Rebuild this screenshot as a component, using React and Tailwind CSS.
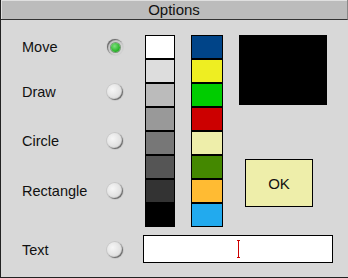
import React from 'react';

const grays = ['#ffffff', '#dddddd', '#bbbbbb', '#999999', '#777777', '#555555', '#333333', '#000000'];
const colours = ['#004488', '#eeee22', '#00cc00', '#cc0000', '#eeeeaa', '#448800', '#ffbb33', '#22aaee'];

const tools = [
  { label: 'Move', mt: 'mt-[17px]', on: true },
  { label: 'Draw', mt: 'mt-[25px]' },
  { label: 'Circle', mt: 'mt-[29px]' },
  { label: 'Rectangle', mt: 'mt-[30px]' },
];

function Radio({ on }) {
  if (on) {
    return (
      <div className="w-4 h-4 rounded-full bg-[radial-gradient(circle_at_60%_60%,#e8e8e8,#c4c4c4_70%,#8a8a8a)] shadow-[inset_1px_1px_1px_#666,0_0_0_1px_#d0d0d0] flex items-center justify-center">
        <div className="w-[9px] h-[9px] rounded-full bg-[radial-gradient(circle_at_40%_35%,#7fe07f,#22b022_70%,#127a12)] shadow-[0_0_0_1px_#7a9a7a]" />
      </div>
    );
  }
  return (
    <div className="w-4 h-4 rounded-full bg-[radial-gradient(circle_at_35%_35%,#f6f6f6,#e0e0e0_60%,#b0b0b0)] shadow-[inset_-1px_-1px_1px_#666,0_0_0_1px_#c8c8c8]" />
  );
}

function Row({ label, on, className }) {
  return (
    <div className={`flex items-center h-5 ${className || ''}`}>
      <span className="w-[84px] pl-[21px] box-content text-[14.5px] leading-none text-[#111]">{label}</span>
      <div className="ml-[1px]">
        <Radio on={on} />
      </div>
    </div>
  );
}

function Column({ list, width }) {
  return (
    <div className={`flex flex-col ${width}`}>
      {list.map((c) => (
        <div key={c} className="h-6 border border-black" style={{ background: c }} />
      ))}
    </div>
  );
}

export default function App() {
  return (
    <div className="w-[348px] h-[278px] bg-[#d8d8d8] border-l border-b border-[#222] flex flex-col overflow-hidden" style={{ fontFamily: '"Liberation Sans", Arial, sans-serif' }}>
      <div className="h-5 shrink-0 bg-[#bcbcbc] border-b border-[#333] border-r border-r-[#888] shadow-[inset_1px_1px_0_#e0e0e0] flex items-center justify-center text-[15px] leading-none text-[#111]">
        Options
      </div>

      <div className="flex h-[207px]">
        <div className="flex flex-col w-[144px]">
          {tools.map((t) => (
            <Row key={t.label} label={t.label} on={t.on} className={t.mt} />
          ))}
        </div>
        <div className="pt-[15px] flex gap-4">
          <Column list={grays} width="w-[30px]" />
          <Column list={colours} width="w-8" />
        </div>
        <div className="pt-[15px] pl-4 flex flex-col">
          <div className="w-[88px] h-[70px] bg-black" />
          <button className="mt-[54px] ml-[6px] w-[68px] h-12 bg-[#eeeeaa] border border-black text-[15px] leading-none text-[#111]">
            OK
          </button>
        </div>
      </div>

      <div className="flex items-center mt-2">
        <div className="flex flex-col w-[142px]">
          <Row label="Text" className="mt-[2px]" />
        </div>
        <div className="w-[190px] h-7 bg-white border border-black flex items-center justify-center">
          <div className="flex flex-col items-center">
            <div className="w-[3px] h-px bg-[#cc0000]" />
            <div className="w-px h-4 bg-[#cc0000]" />
            <div className="w-[3px] h-px bg-[#cc0000]" />
          </div>
        </div>
      </div>
    </div>
  );
}
